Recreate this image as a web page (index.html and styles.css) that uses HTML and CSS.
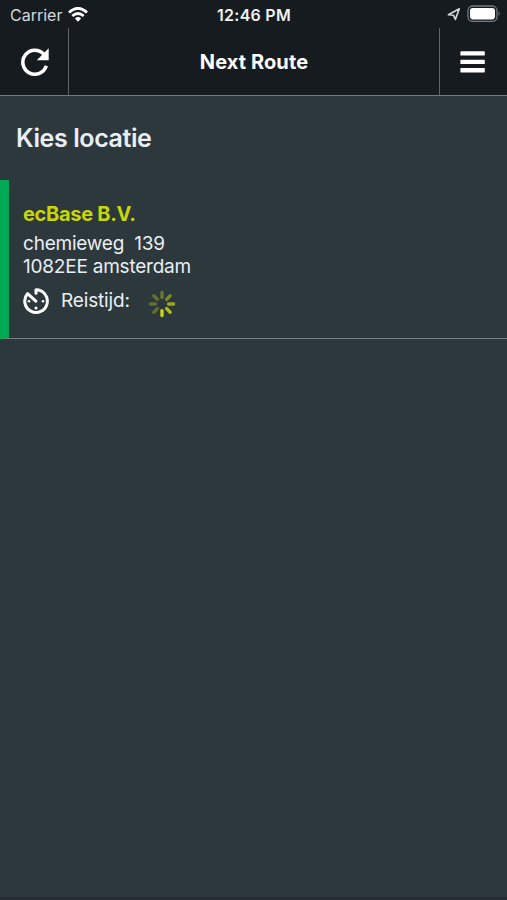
FILE: index.html
```
<!DOCTYPE html>
<html lang="nl">

<head>
    <meta charset="UTF-8">
    <meta name="viewport" content="width=device-width, initial-scale=1.0">
    <title>Next Route</title>
    <link rel="stylesheet" href="styles.css">
</head>

<body>

    <div class="status-bar">
        <div class="status-left">
            <span class="carrier">Carrier</span>
            <svg class="wifi" width="20" height="15" viewBox="0 0 20 15">
                <g fill="none" stroke="#fff" stroke-width="2.7">
                    <path d="M1 5.4Q10 -2.6 19 5.4"/>
                    <path d="M4.3 9Q10 4 15.7 9"/>
                </g>
                <path d="M6.9 11.4Q10 8.8 13.1 11.4L10 14.7Z" fill="#fff"/>
            </svg>
        </div>
        <span class="time">12:46 PM</span>
        <div class="status-right">
            <svg class="arrow" width="14" height="14" viewBox="0 0 14 14">
                <path d="M1.4 7.8L12.3 1.8L8.4 12.4L6.4 8.2Z" fill="none" stroke="#d5d8da" stroke-width="1.6" stroke-linejoin="round"/>
            </svg>
            <svg class="battery" width="34" height="18" viewBox="0 0 34 18">
                <rect x="1" y="1" width="29" height="15.4" rx="4.6" fill="none" stroke="#777b7f" stroke-width="1.3"/>
                <rect x="3" y="3" width="25" height="11.4" rx="2.8" fill="#fff"/>
                <path d="M31.6 6.2Q34 8.6 31.6 11Z" fill="#777b7f"/>
            </svg>
        </div>
    </div>

    <header class="nav-bar">
        <button class="nav-button refresh">
            <svg width="30" height="30" viewBox="0 0 30 30">
                <path d="M26.3 18.8A12 12 0 1 1 24 7.5" fill="none" stroke="#fff" stroke-width="3.5"/>
                <path d="M28.7 1.3V13.2H16.8Z" fill="#fff"/>
            </svg>
        </button>
        <h1>Next Route</h1>
        <button class="nav-button menu">
            <svg width="25" height="22" viewBox="0 0 25 22">
                <g fill="#fff">
                    <rect x="0.4" y="0.2" width="24.4" height="4.4" rx="0.7"/>
                    <rect x="0.4" y="8.7" width="24.4" height="4.4" rx="0.7"/>
                    <rect x="0.4" y="17.1" width="24.4" height="4.4" rx="0.7"/>
                </g>
            </svg>
        </button>
    </header>

    <main>
        <h2>Kies locatie</h2>
        <div class="location">
            <h3>ecBase B.V.</h3>
            <p class="street">chemieweg&nbsp; 139</p>
            <p class="city">1082EE amsterdam</p>
            <div class="travel">
                <svg class="timer" width="26" height="26" viewBox="0 0 26 26">
                    <path d="M13 5.2V1.8A11.3 11.3 0 1 1 4.6 5.6L12.8 13.2" fill="none" stroke="#fff" stroke-width="3" stroke-linejoin="round" stroke-linecap="round"/>
                    <g fill="#fff">
                        <circle cx="6" cy="13.2" r="1.3"/>
                        <circle cx="13" cy="20" r="1.5"/>
                        <circle cx="20" cy="13.2" r="1.3"/>
                    </g>
                </svg>
                <span class="travel-label">Reistijd:</span>
                <svg class="spinner" width="28" height="28" viewBox="-14 -14 28 28">
                    <g stroke="#c6d414" stroke-width="3.4" stroke-linecap="round">
                        <path d="M0 -6.6V-11.6" opacity=".4"/>
                        <path d="M0 -6.6V-11.6" opacity=".5" transform="rotate(45)"/>
                        <path d="M0 -6.6V-11.6" opacity=".72" transform="rotate(90)"/>
                        <path d="M0 -6.6V-11.6" opacity=".85" transform="rotate(135)"/>
                        <path d="M0 -6.6V-11.6" transform="rotate(180)"/>
                        <path d="M0 -6.6V-11.6" opacity=".35" transform="rotate(225)"/>
                        <path d="M0 -6.6V-11.6" opacity=".35" transform="rotate(270)"/>
                        <path d="M0 -6.6V-11.6" opacity=".35" transform="rotate(315)"/>
                    </g>
                </svg>
            </div>
        </div>
    </main>

</body>

</html>
```

FILE: styles.css
```
body {
    font-family: Inter, "Liberation Sans", sans-serif;
    background-color: #2d383c;
    color: #e9eef5;
    margin: 0;
    height: 900px;
    box-sizing: border-box;
    border-bottom: 3px solid #262b33;
}

h1,
h2,
h3,
p {
    margin: 0;
}

svg {
    display: block;
}

.status-bar {
    display: grid;
    grid-template-columns: 1fr auto 1fr;
    align-items: center;
    height: 28px;
    padding: 0 6px 0 7px;
    background-color: #161b20;
}

.status-left,
.status-right {
    display: flex;
    align-items: center;
}

.status-left {
    padding-left: 3px;
}

.status-right {
    justify-content: flex-end;
}

.carrier {
    font-size: 16px;
    line-height: 20px;
    color: #d5d8da;
    padding-top: 2px;
}

.wifi {
    margin-left: 6px;
}

.time {
    font-size: 16px;
    font-weight: 600;
    line-height: 20px;
    letter-spacing: 0.25px;
    padding-top: 2px;
    color: #eff1f3;
}

.battery {
    margin-left: 6px;
}

.nav-bar {
    display: grid;
    grid-template-columns: 69px 1fr 68px;
    height: 68px;
    box-sizing: border-box;
    background-color: #161b20;
    border-bottom: 1px solid #747a7d;
}

.nav-bar h1 {
    font-size: 20px;
    font-weight: 700;
    line-height: 68px;
    height: 67px;
    letter-spacing: 0.1px;
    text-align: center;
    color: #fff;
}

.nav-button {
    display: flex;
    align-items: center;
    justify-content: center;
    padding: 0;
    background: none;
    border: 0 solid #62666a;
    cursor: pointer;
}

.refresh {
    padding-left: 1px;
    border-right-width: 1px;
}

.menu {
    padding-right: 2px;
    border-left-width: 1px;
}

h2 {
    font-size: 25px;
    font-weight: 600;
    line-height: 30px;
    letter-spacing: -0.4px;
    padding: 27px 16px 27px;
}

.location {
    height: 159px;
    box-sizing: border-box;
    padding: 22px 0 0 14px;
    border-left: 9px solid #00aa55;
    border-bottom: 1px solid #777f83;
}

.location h3 {
    font-size: 20px;
    font-weight: 700;
    line-height: 24px;
    letter-spacing: -0.3px;
    color: #c8d60a;
}

.location p {
    font-size: 19px;
    line-height: 23px;
    letter-spacing: -0.22px;
}

.location .street {
    padding-top: 6px;
}

.travel {
    display: flex;
    align-items: flex-start;
    margin-top: 10px;
}

.travel-label {
    font-size: 19px;
    line-height: 24px;
    letter-spacing: -0.15px;
    margin: 1px 0 0 12px;
}

.spinner {
    margin: 2px 0 0 18px;
}
```
